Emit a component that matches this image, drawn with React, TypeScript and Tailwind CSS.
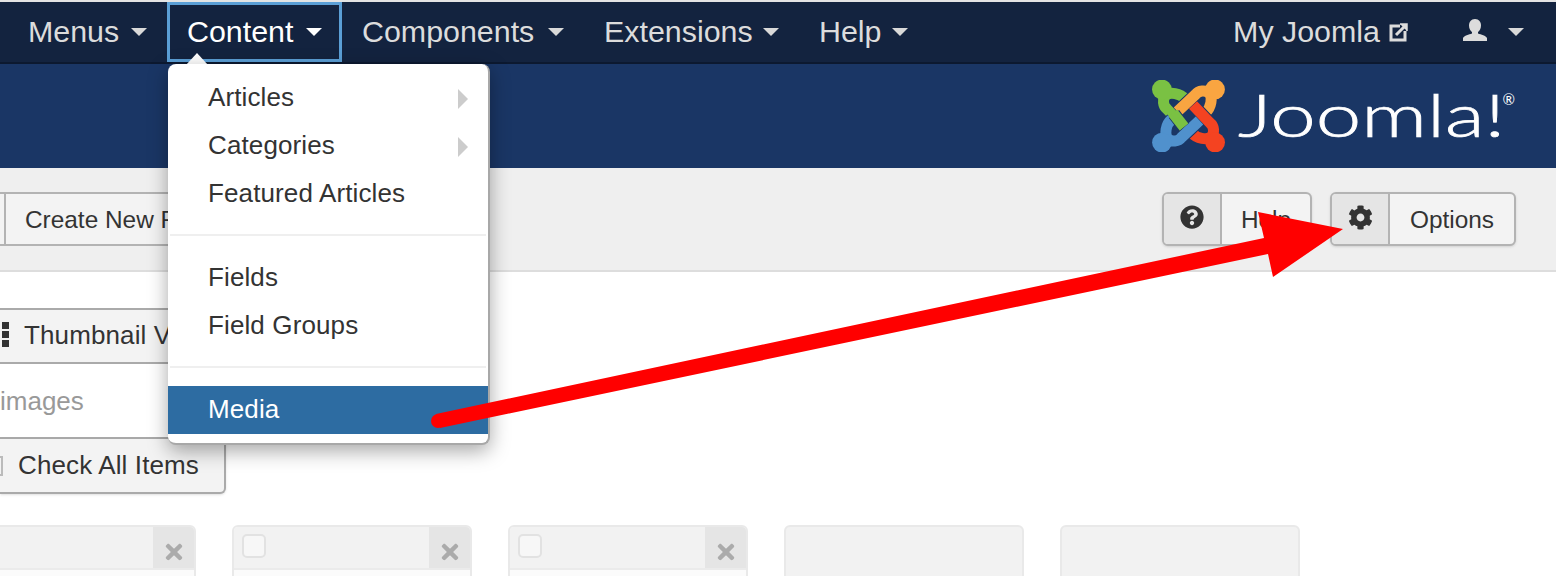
import React from "react";
import { FaCog, FaQuestionCircle, FaTimes } from "react-icons/fa";

const Caret = ({ c = "border-t-[#d9d9d9]" }: { c?: string }) => (
  <span className={`inline-block w-0 h-0 border-x-[8px] border-x-transparent border-t-[8px] ${c}`} />
);

const NavItem = ({ label, active, w }: { label: string; active?: boolean; w: string }) => (
  <div
    className={`flex items-center justify-between h-full ${w} ${active ? "border-[3px] border-[#5b9fd6] px-[17px] text-white" : "px-5 text-[#dcdcdc]"}`}
  >
    <span>{label}</span>
    <Caret c={active ? "border-t-white" : "border-t-[#d9d9d9]"} />
  </div>
);

const Logo = () => {
  const d = "M33 19 C28 13 18 12 14 15 C10 19 11 26 15 29 L32 47";
  const piece = (color: string, angle: number) => (
    <g transform={`rotate(${angle} 36.5 36)`}>
      <path d={d} fill="none" stroke="#1a3665" strokeWidth="13" />
      <path d={d} fill="none" stroke={color} strokeWidth="11" />
      <circle cx="9.9" cy="9.5" r="9.9" fill={color} />
    </g>
  );
  return (
    <svg width="73" height="72" viewBox="0 0 73 72">
      {piece("#7ac143", 0)}
      {piece("#f9a541", 90)}
      {piece("#f44321", 180)}
      {piece("#5091cd", 270)}
      <path d="M22 34 L32 47" fill="none" stroke="#1a3665" strokeWidth="13" />
      <path d="M21 33 L32 47" fill="none" stroke="#7ac143" strokeWidth="11" />
    </svg>
  );
};

const Card = ({ check, x, plain, first }: { check?: boolean; x?: boolean; plain?: boolean; first?: boolean }) => (
  <div className={`shrink-0 w-[240px] ${first ? "-ml-[44px]" : ""} h-[60px] border-2 border-[#e9e9e9] rounded-t-[6px] overflow-hidden ${plain ? "bg-[#f2f2f2]" : "bg-[#fbfbfb]"}`}>
    {!plain && (
      <div className="flex h-[43px] border-b-2 border-[#ebebeb] bg-[#f2f2f2]">
        <div className="flex-1 pl-2 pt-[7px]">
          {check && <div className="w-6 h-6 rounded-[5px] border-2 border-[#e2e2e2] bg-[#f7f7f7]" />}
        </div>
        {x && (
          <div className="w-[41px] bg-[#e5e5e5] flex items-center justify-center pt-2">
            <FaTimes className="text-[#ababab] text-[24px]" />
          </div>
        )}
      </div>
    )}
  </div>
);

const MenuItem = ({ label, sub, active }: { label: string; sub?: boolean; active?: boolean }) => (
  <div className={`h-12 flex items-center justify-between pl-10 pr-5 ${active ? "bg-[#2d6ca2] text-white pb-[2px]" : "text-[#333333]"}`}>
    <span>{label}</span>
    {sub && <span className="w-0 h-0 mt-1 border-y-[10px] border-y-transparent border-l-[10px] border-l-[#cccccc]" />}
  </div>
);

export default function App() {
  return (
    <div className="relative w-[1556px] h-[576px] overflow-hidden bg-white font-['Liberation_Sans',Arial,sans-serif]">
      <div className="h-[2px] bg-[#e4e4e4]" />
      <nav className="h-[62px] bg-[#13233f] border-b-2 border-[#0c1930] flex justify-between text-[30.4px] pl-2 pb-0">
        <div className="flex h-[60px]">
          <NavItem label="Menus" w="w-[159px]" />
          <NavItem label="Content" active w="w-[175px]" />
          <NavItem label="Components" w="w-[242px]" />
          <NavItem label="Extensions" w="w-[215px]" />
          <NavItem label="Help" w="w-[129px]" />
        </div>
        <div className="flex h-[60px] items-center pr-8 text-[#dcdcdc]">
          <span>My Joomla</span>
          <svg className="ml-[9px] mr-[54px]" width="20" height="20" viewBox="0 0 20 20" fill="none" stroke="#dcdcdc" strokeWidth="3">
            <path d="M11 4 H2 V18 H16 V9" />
            <path d="M7 13 L17 3" />
            <path d="M11 2 H18 V9" fill="#dcdcdc" strokeWidth="1.5" />
          </svg>
          <svg width="24" height="22" viewBox="0 0 24 22" fill="#dcdcdc" className="-mt-1">
            <path d="M12 0 C16 0 18 3 18 6.5 C18 9.5 16.5 12 15 13 V14.5 C18 15.5 23 16.5 24 19 V22 H0 V19 C1 16.5 6 15.5 9 14.5 V13 C7.5 12 6 9.5 6 6.5 C6 3 8 0 12 0 Z" />
          </svg>
          <span className="ml-[21px] w-0 h-0 border-x-[8px] border-x-transparent border-t-[8px] border-t-[#d9d9d9]" />
        </div>
      </nav>

      <header className="h-[104px] bg-[#1a3665] flex items-center justify-end pr-[41px]">
        <div className="flex items-center">
          <Logo />
          <div className="relative ml-[13px] w-[277px] h-[70px] text-white font-['Lato',sans-serif]">
            <span className="block -mt-[2px] font-light text-[60px] leading-[70px] origin-left scale-x-[1.36] [-webkit-text-stroke:0.7px_white]">Joomla!</span>
            <span className="absolute right-0 top-[11px] text-[15px] leading-none">®</span>
          </div>
        </div>
      </header>

      <div className="h-[104px] bg-[#efefef] border-b-2 border-[#dddddd] flex items-start justify-between pt-6 text-[24.4px] text-[#333333]">
        <div className="flex h-[54px] w-[300px] -ml-[10px] border-y-2 border-x-2 border-[#b3b3b3] bg-[#f3f3f3] items-center">
          <div className="w-[14px] h-full border-r-2 border-[#b3b3b3]" />
          <span className="pl-[19px] pt-[2px]">Create New Folder</span>
        </div>
        <div className="flex gap-[18px] pr-10">
          <div className="flex h-[54px] w-[150px] rounded-[6px] border-2 border-[#b3b3b3] bg-[#f3f3f3] shadow-sm overflow-hidden">
            <div className="w-[58px] bg-[#e5e5e5] border-r-2 border-[#b3b3b3] flex items-center justify-center pb-1">
              <FaQuestionCircle className="text-[24px] text-[#333333]" />
            </div>
            <div className="flex-1 flex items-center justify-center pt-[2px]">Help</div>
          </div>
          <div className="flex h-[54px] w-[186px] rounded-[6px] border-2 border-[#b3b3b3] bg-[#f3f3f3] shadow-sm overflow-hidden">
            <div className="w-[58px] bg-[#e5e5e5] border-r-2 border-[#b3b3b3] flex items-center justify-center pb-1">
              <FaCog className="text-[25px] text-[#333333]" />
            </div>
            <div className="flex-1 flex items-center justify-center pt-[2px]">Options</div>
          </div>
        </div>
      </div>

      <main className="text-[26px] tracking-[0.12px] text-[#333333] pt-9">
        <div className="w-[300px] h-[56px] -ml-[2px] border-y-2 border-[#aaaaaa] bg-[#f3f3f3] flex items-center pl-1 pb-[2px]">
          <svg width="7" height="26" viewBox="0 0 7 26" fill="#333333">
            <rect width="7" height="7" />
            <rect y="9" width="7" height="7" />
            <rect y="18" width="7" height="7" />
          </svg>
          <span className="pl-[15px]">Thumbnail View</span>
        </div>
        <div className="w-[300px] h-[75px] border-b-2 border-[#aaaaaa] flex items-center text-[#999999] tracking-normal pt-[2px]">
          images
        </div>
        <div className="w-[226px] h-[55px] rounded-br-[6px] border-2 border-l-0 border-t-0 border-[#aaaaaa] bg-[#f3f3f3] shadow-sm flex items-center">
          <span className="w-[3px] h-5 border-2 border-l-0 border-[#bbbbbb]" />
          <span className="pl-[15px]">Check All Items</span>
        </div>
        <div className="flex gap-9 mt-[31px]">
          <Card x first />
          <Card check x />
          <Card check x />
          <Card plain />
          <Card plain />
        </div>
      </main>

      <div className="absolute left-[186px] top-[53px] w-0 h-0 border-x-[11px] border-x-transparent border-b-[12px] border-b-white" />
      <div className="absolute left-[168px] top-[64px] w-[322px] h-[381px] bg-white rounded-[8px] border-r-2 border-b-2 border-[#a8a8a8] py-[9px] text-[26px] tracking-[0.12px] shadow-[0_6px_20px_rgba(0,0,0,0.35)]">
        <MenuItem label="Articles" sub />
        <MenuItem label="Categories" sub />
        <MenuItem label="Featured Articles" />
        <div className="h-[2px] bg-[#efefef] my-[17px] mx-[2px]" />
        <MenuItem label="Fields" />
        <MenuItem label="Field Groups" />
        <div className="h-[2px] bg-[#efefef] mt-[17px] mb-[18px] mx-[2px]" />
        <MenuItem label="Media" active />
      </div>

      <svg className="absolute left-0 top-0 pointer-events-none" width="1556" height="576" viewBox="0 0 1556 576">
        <polygon points="1258,212 1343,229 1273,277 1268,254 440,428 436,414 1264,238" fill="#ff0000" />
        <circle cx="438" cy="421" r="7" fill="#ff0000" />
      </svg>
    </div>
  );
}
